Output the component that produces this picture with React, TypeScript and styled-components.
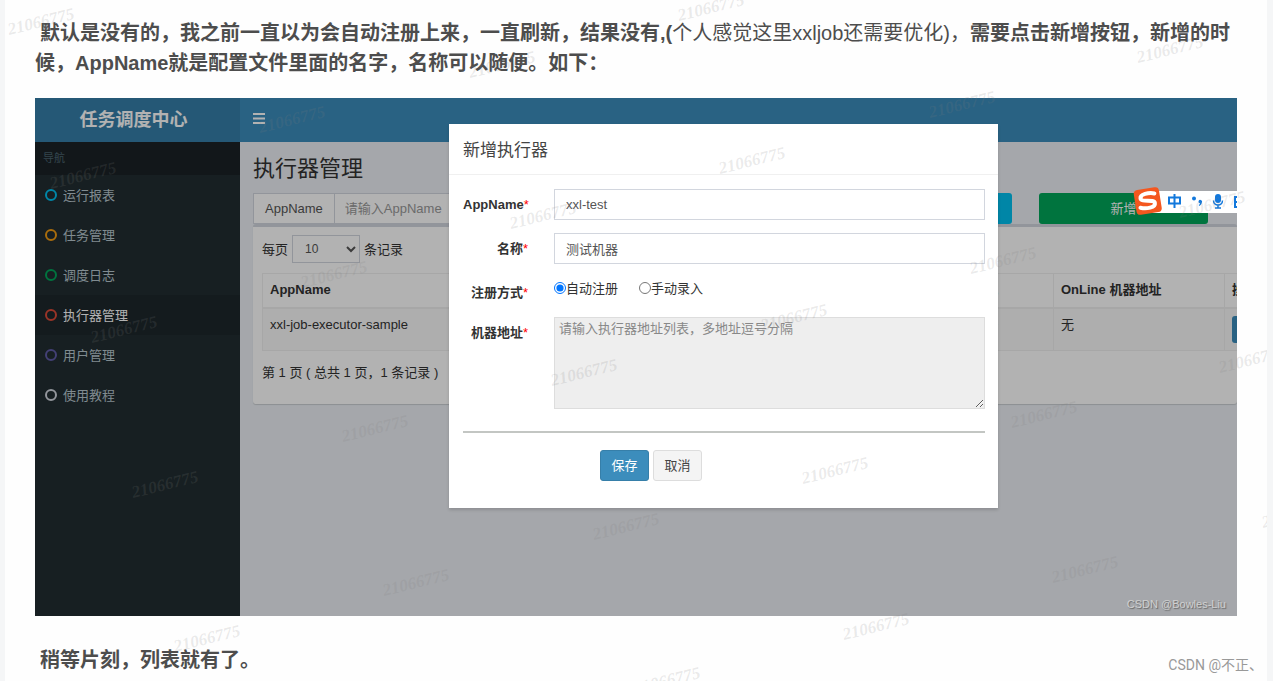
import React from 'react';
import styled, { createGlobalStyle } from 'styled-components';

const GlobalStyle = createGlobalStyle`
  *, *::before, *::after { box-sizing: border-box; }
  body {
    margin: 0;
    background: #f5f6f7;
    font-family: "Liberation Sans", "Noto Sans CJK SC", sans-serif;
  }
  button, input, select, textarea { font-family: inherit; }
`;

/* ---------- article ---------- */

const Article = styled.main`
  position: relative;
  overflow: hidden;
  min-height: 100vh;
  margin: 0 6px 0 5px;
  padding: 18px 30px 0;
  background: #fefefe;
`;

const Paragraph = styled.p`
  margin: 0;
  color: #4d4d4d;
  font-size: 20px;
  line-height: 30px;
  font-weight: 700;
  text-indent: 5px;
`;

const Light = styled.span`
  font-weight: 400;
`;

const Figure = styled.figure`
  position: relative;
  overflow: hidden;
  height: 518px;
  margin: 20px 0 29px;
  color: #333;
  font-size: 13px;
  line-height: 19px;
`;

const Credit = styled.small`
  position: absolute;
  right: 4px;
  bottom: 5px;
  color: #999;
  font-family: Roboto, "Noto Sans CJK SC", sans-serif;
  font-size: 14px;
  line-height: 22px;
`;

const FigureCredit = styled.figcaption`
  position: absolute;
  right: 11px;
  bottom: 4px;
  color: #d0d0d0;
  font-size: 11px;
  line-height: 16px;
  text-shadow: 1px 1px 1px #666;
`;

/* ---------- admin console ---------- */

const Console = styled.div`
  display: grid;
  grid-template: 44px 1fr / 205px 1fr;
  height: 100%;
`;

const Brand = styled.div`
  display: flex;
  align-items: center;
  justify-content: center;
  padding-right: 8px;
  background: #367fa9;
  color: #fff;
  font-size: 18px;
  font-weight: 700;
`;

const TopBar = styled.header`
  display: flex;
  align-items: center;
  padding: 0 13px 4px;
  background: #3c8dbc;
`;

const MenuToggle = styled.button`
  display: flex;
  padding: 0;
  border: 0;
  background: none;
  color: #fff;
`;

const Sidebar = styled.nav`
  background: #222d32;
`;

const SidebarTitle = styled.div`
  padding: 7px 8px;
  background: #1a2226;
  color: #4b646f;
  font-size: 11px;
`;

const MenuLink = styled.a<{ $active?: boolean }>`
  display: flex;
  align-items: center;
  gap: 6px;
  height: 40px;
  padding: 0 10px;
  background: ${p => (p.$active ? '#1e282c' : 'transparent')};
  color: ${p => (p.$active ? '#fff' : '#b8c7ce')};
  text-decoration: none;
`;

const Ring = styled.span<{ $color: string }>`
  width: 12px;
  height: 12px;
  border: 2px solid ${p => p.$color};
  border-radius: 50%;
`;

const Content = styled.section`
  min-width: 0;
  padding: 12px 0 0 13px;
  background: #ecf0f5;
`;

const PageTitle = styled.h1`
  margin: 0 0 9px;
  font-size: 22px;
  line-height: 30px;
  font-weight: 400;
`;

const FilterRow = styled.form`
  display: flex;
  gap: 27px;
  padding-right: 29px;
`;

const FilterGroup = styled.div`
  display: flex;
  flex: 1;
  height: 31px;
`;

const Addon = styled.label`
  padding: 5px 11px;
  border: 1px solid #d2d6de;
  border-right: 0;
  background: #fff;
  color: #555;
`;

const FilterInput = styled.input`
  flex: 1;
  min-width: 0;
  padding: 0 10px;
  border: 1px solid #d2d6de;
  background: #fff;
  font-size: 13px;
  &::placeholder { color: #999; }
`;

const WideButton = styled.button<{ $color: string }>`
  width: 169px;
  height: 31px;
  padding: 0 0 2px;
  border: 0;
  border-radius: 3px;
  background: ${p => p.$color};
  color: #fff;
  font-size: 13px;
`;

const Box = styled.div`
  padding: 8px 0 22px 9px;
  border-top: 3px solid #d2d6de;
  border-radius: 3px;
  background: #fff;
  box-shadow: 0 1px 1px rgba(0, 0, 0, 0.15);
`;

const LengthLabel = styled.label`
  display: flex;
  align-items: center;
  gap: 4px;
  height: 28px;
  margin-bottom: 10px;
`;

const LengthSelect = styled.select`
  width: 68px;
  height: 28px;
  padding: 0 0 0 8px;
  border: 1px solid #d2d6de;
  background: #fff;
  color: #555;
  font-size: 12px;
`;

const Table = styled.table`
  width: 1100px;
  table-layout: fixed;
  border-collapse: collapse;
  th, td {
    padding: 6px 7px;
    border: 1px solid #f0f0f0;
    text-align: left;
    vertical-align: top;
    white-space: nowrap;
  }
  th { height: 34px; border-bottom: 2px solid #f0f0f0; }
  td { height: 43px; background: #f9f9f9; }
`;

const RowButton = styled.button`
  width: 60px;
  height: 27px;
  margin-top: 1px;
  border: 0;
  border-radius: 3px;
  background: #3c8dbc;
  color: #fff;
  font-size: 12px;
`;

const PageInfo = styled.div`
  margin-top: 12px;
`;

/* ---------- dialog ---------- */

const Backdrop = styled.div`
  position: absolute;
  inset: 0;
  display: flex;
  align-items: flex-start;
  justify-content: center;
  padding: 26px 0 0 175px;
  background: rgba(0, 0, 0, 0.3);
`;

const Dialog = styled.div`
  width: 549px;
  background: #fff;
  box-shadow: 0 2px 3px rgba(0, 0, 0, 0.15);
`;

const DialogTitle = styled.h2`
  margin: 0;
  padding: 15px 14px 12px;
  border-bottom: 1px solid #f0f0f0;
  color: #444;
  font-size: 17px;
  line-height: 23px;
  font-weight: 400;
`;

const DialogForm = styled.form`
  display: flex;
  flex-direction: column;
  gap: 13px;
  padding: 14px 13px 27px 14px;
`;

const Field = styled.div`
  display: grid;
  grid-template-columns: 65px 1fr;
  column-gap: 26px;
`;

const FieldLabel = styled.label`
  padding-top: 6px;
  color: #333;
  font-weight: 700;
  text-align: right;
  white-space: nowrap;
`;

const Star = styled.span`
  color: #f00;
  font-weight: 400;
`;

const TextInput = styled.input`
  width: 100%;
  height: 31px;
  padding: 0 11px;
  border: 1px solid #d2d6de;
  background: #fff;
  color: #555;
  font-size: 13px;
`;

const RadioRow = styled.div`
  display: flex;
  gap: 21px;
  height: 27px;
`;

const RadioLabel = styled.label`
  display: flex;
  align-items: center;
  height: 22px;
  input { width: 12px; height: 12px; margin: 0; }
`;

const AddressArea = styled.textarea`
  display: block;
  width: 100%;
  height: 92px;
  padding: 1px 4px;
  border: 1px solid #ddd;
  background: #eee;
  font-size: 13px;
  line-height: 19px;
  &::placeholder { color: #888; }
`;

const Divider = styled.hr`
  width: 100%;
  margin: 9px 0 4px;
  border: 0;
  border-top: 2px solid #c3c6c3;
`;

const Actions = styled.div`
  display: flex;
  gap: 4px;
  padding-left: 137px;
`;

const ActionButton = styled.button<{ $primary?: boolean }>`
  width: 49px;
  height: 31px;
  padding: 0 0 2px;
  border: 1px solid ${p => (p.$primary ? '#367fa9' : '#ddd')};
  border-radius: 3px;
  background: ${p => (p.$primary ? '#3c8dbc' : '#f4f4f4')};
  color: ${p => (p.$primary ? '#fff' : '#444')};
  font-size: 13px;
`;

/* ---------- input method bar ---------- */

const ImeBar = styled.div`
  position: absolute;
  top: 89px;
  right: 0;
  display: flex;
`;

/* ---------- watermark ---------- */

const Mark = styled.span<{ $x: number; $y: number }>`
  position: absolute;
  left: ${p => p.$x}px;
  top: ${p => p.$y}px;
  color: rgba(128, 128, 128, 0.17);
  font: italic 700 17px/20px "Liberation Serif", serif;
  transform: translate(-50%, -50%) rotate(-14deg);
  pointer-events: none;
`;

const marks: [number, number][] = [
  [36, 22], [706, 8], [497, 65], [1165, 50],
  [78, 176], [287, 120], [957, 105], [747, 161], [538, 216], [1207, 205],
  [119, 330], [329, 275], [998, 261], [789, 318], [579, 373], [1247, 360],
  [160, 485], [370, 429], [1039, 415], [830, 471], [621, 527], [1290, 515],
  [202, 639], [411, 583], [1080, 570], [871, 627], [662, 681],
];

const menu = [
  { text: '运行报表', color: '#00c0ef' },
  { text: '任务管理', color: '#f39c12' },
  { text: '调度日志', color: '#00a65a' },
  { text: '执行器管理', color: '#dd4b39', active: true },
  { text: '用户管理', color: '#605ca8' },
  { text: '使用教程', color: '#d2d6de' },
];

function ImeIcons() {
  return (
    <svg width="104" height="28" viewBox="0 0 104 28" role="img" aria-label="输入法">
      <path d="M15 4H104V26H15Z" fill="#fff" />
      <g transform="rotate(-9 15 14)">
        <rect x="2" y="1.500" width="25.500" height="25" rx="4" fill="#f4571f" />
        <path
          d="M22.500 7.500C17 5.600 8 6 8 10.300C8 14.700 21.500 12.500 21.500 17C21.500 21.800 12 21.800 6.500 19.500"
          fill="none"
          stroke="#fff"
          strokeWidth="4"
          strokeLinecap="round"
        />
      </g>
      <g fill="none" stroke="#1278dc" strokeWidth="2">
        <path d="M36 10.500H47V16.500H36ZM41.500 7V21" />
        <circle cx="61" cy="11.500" r="1" />
        <path d="M80.500 13.500C80.500 19.500 89.500 19.500 89.500 13.500M85 18V21M82 21H88" strokeWidth="1.500" />
        <path d="M106 10H102V20H106M102 15H106" />
      </g>
      <path d="M65.500 14.500a1.800 1.800 0 1 1 3.400 1c-.3 1.500-1.200 2.700-2.700 3.400l-.4-.8c.8-.5 1.200-1.200 1.200-1.900c-.8 0-1.500-.6-1.500-1.700Z" fill="#1278dc" />
      <rect x="82" y="7" width="6" height="9" rx="3" fill="#1278dc" />
    </svg>
  );
}

export default function App() {
  return (
    <Article lang="zh-CN">
      <GlobalStyle />
      <Paragraph>
        默认是没有的，我之前一直以为会自动注册上来，一直刷新，结果没有,(<Light>个人感觉这里xxljob还需要优化)，</Light>
        需要点击新增按钮，新增的时候，AppName就是配置文件里面的名字，名称可以随便。如下：
      </Paragraph>

      <Figure>
        <Console>
          <Brand>任务调度中心</Brand>
          <TopBar>
            <MenuToggle type="button" aria-label="切换导航">
              <svg width="12" height="11" viewBox="0 0 12 11">
                <path d="M0 1H12M0 5.500H12M0 10H12" stroke="currentColor" strokeWidth="2" />
              </svg>
            </MenuToggle>
          </TopBar>
          <Sidebar>
            <SidebarTitle>导航</SidebarTitle>
            {menu.map(item => (
              <MenuLink key={item.text} href="#" $active={item.active}>
                <Ring $color={item.color} />
                {item.text}
              </MenuLink>
            ))}
          </Sidebar>
          <Content>
            <PageTitle>执行器管理</PageTitle>
            <FilterRow>
              <FilterGroup>
                <Addon htmlFor="filter-app">AppName</Addon>
                <FilterInput id="filter-app" placeholder="请输入AppName" />
              </FilterGroup>
              <WideButton type="button" $color="#00c0ef">搜索</WideButton>
              <WideButton type="button" $color="#00a65a">新增</WideButton>
            </FilterRow>
            <Box>
              <LengthLabel>
                每页
                <LengthSelect defaultValue="10">
                  <option>10</option>
                </LengthSelect>
                条记录
              </LengthLabel>
              <Table>
                <colgroup>
                  <col width="340" />
                  <col width="336" />
                  <col width="115" />
                  <col width="171" />
                  <col />
                </colgroup>
                <thead>
                  <tr>
                    <th>AppName</th>
                    <th>名称</th>
                    <th>注册方式</th>
                    <th>OnLine 机器地址</th>
                    <th>操作</th>
                  </tr>
                </thead>
                <tbody>
                  <tr>
                    <td>xxl-job-executor-sample</td>
                    <td>示例执行器</td>
                    <td>自动注册</td>
                    <td>无</td>
                    <td><RowButton type="button">操作</RowButton></td>
                  </tr>
                </tbody>
              </Table>
              <PageInfo>第 1 页 ( 总共 1 页，1 条记录 )</PageInfo>
            </Box>
          </Content>
        </Console>

        <Backdrop>
          <Dialog role="dialog" aria-labelledby="dialog-title">
            <DialogTitle id="dialog-title">新增执行器</DialogTitle>
            <DialogForm>
              <Field>
                <FieldLabel htmlFor="app-name">AppName<Star>*</Star></FieldLabel>
                <TextInput id="app-name" defaultValue="xxl-test" />
              </Field>
              <Field>
                <FieldLabel htmlFor="title">名称<Star>*</Star></FieldLabel>
                <TextInput id="title" defaultValue="测试机器" />
              </Field>
              <Field>
                <FieldLabel as="span" id="mode-label">注册方式<Star>*</Star></FieldLabel>
                <RadioRow role="radiogroup" aria-labelledby="mode-label">
                  <RadioLabel><input type="radio" name="mode" defaultChecked />自动注册</RadioLabel>
                  <RadioLabel><input type="radio" name="mode" />手动录入</RadioLabel>
                </RadioRow>
              </Field>
              <Field>
                <FieldLabel htmlFor="address">机器地址<Star>*</Star></FieldLabel>
                <AddressArea id="address" readOnly placeholder="请输入执行器地址列表，多地址逗号分隔" />
              </Field>
              <Divider />
              <Actions>
                <ActionButton type="button" $primary>保存</ActionButton>
                <ActionButton type="button">取消</ActionButton>
              </Actions>
            </DialogForm>
          </Dialog>
        </Backdrop>

        <ImeBar><ImeIcons /></ImeBar>
        <FigureCredit>CSDN @Bowles-Liu</FigureCredit>
      </Figure>

      <Paragraph>稍等片刻，列表就有了。</Paragraph>
      <Credit>CSDN @不正、</Credit>

      {marks.map(([x, y]) => (
        <Mark key={`${x}-${y}`} $x={x} $y={y} aria-hidden="true">21066775</Mark>
      ))}
    </Article>
  );
}
